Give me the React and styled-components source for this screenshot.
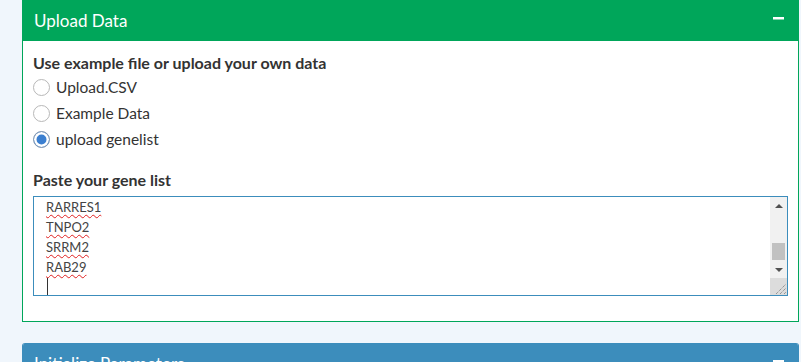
import React from 'react'
import styled, { createGlobalStyle } from 'styled-components'

const GlobalStyle = createGlobalStyle`
  html, body {
    margin: 0;
    padding: 0;
    background: #f0f6fc;
    font-family: Lato, "Open Sans", sans-serif;
    color: #333;
    overflow: hidden;
  }
`

const Page = styled.div`
  padding: 0 2px 0 22px;
  display: flex;
  flex-direction: column;
  gap: 21px;
`

const Box = styled.section`
  background: #fff;
  border: 1px solid ${p => p.color};
  border-top: none;
  border-radius: ${p => (p.rounded ? '3px 3px 0 0' : '0')};
  overflow: hidden;
`

const BoxHeader = styled.header`
  height: 41px;
  margin: 0 -1px;
  padding: 0 15px 0 12px;
  background: ${p => p.color};
  color: #fff;
  display: flex;
  align-items: center;
  justify-content: space-between;
`

const Title = styled.h3`
  margin: 0;
  font-size: 17px;
  font-weight: 400;
  line-height: 1;
`

const Minus = styled.span`
  width: 11px;
  height: 2px;
  margin-top: -6px;
  background: #fff;
  box-shadow: 0 1px 0 rgba(255, 255, 255, 0.5);
`

const BoxBody = styled.div`
  padding: 11px 10px 25px 10px;
`

const Label = styled.div`
  font-size: 16px;
  font-weight: 700;
  line-height: 21px;
  margin-bottom: ${p => p.gap}px;
`

const RadioGroup = styled.div`
  display: flex;
  flex-direction: column;
  margin-bottom: 17px;
`

const RadioRow = styled.label`
  height: 26px;
  display: flex;
  align-items: center;
  gap: 6px;
  font-size: 15.5px;
`

const RadioDot = styled.span`
  width: 17px;
  height: 17px;
  box-sizing: border-box;
  border-radius: 50%;
  border: 1px solid ${p => (p.checked ? '#8a9bb0' : '#b8b8b8')};
  background: ${p => (p.checked ? '#3b7fd0' : '#fff')};
  box-shadow: ${p => (p.checked ? 'inset 0 0 0 2.5px #fff' : 'none')};
`

const TextBox = styled.div`
  height: 100px;
  box-sizing: border-box;
  border: 1px solid #3c8dbc;
  display: flex;
  overflow: hidden;
`

const Lines = styled.div`
  flex: 1;
  padding-left: 12px;
  font-size: 13px;
  line-height: 20px;
  color: #444;
`

const Gene = styled.div`
  height: 20px;
  span {
    text-decoration: underline wavy #e02020;
    text-decoration-thickness: 1px;
    text-underline-offset: 2px;
  }
`

const Caret = styled.div`
  height: 20px;
  width: 1px;
  margin-left: 1px;
  background: #333;
  transform: translateY(1px);
`

const ScrollBar = styled.div`
  width: 17px;
  background: #f1f1f1;
  display: flex;
  flex-direction: column;
  align-items: center;
`

const Arrow = styled.span`
  width: 0;
  height: 0;
  margin: ${p => p.m};
  border-left: 4px solid transparent;
  border-right: 4px solid transparent;
  ${p => (p.up ? 'border-bottom: 4px solid #505050;' : 'border-top: 4px solid #505050;')}
`

const Track = styled.div`
  flex: 1;
  width: 100%;
  display: flex;
  justify-content: center;
  align-items: flex-end;
`

const Thumb = styled.div`
  width: 13px;
  height: 17px;
  margin-bottom: 8px;
  background: #c1c1c1;
`

const Grip = styled.div`
  width: 17px;
  height: 17px;
  background: #dcdcdc;
`

const genes = ['RARRES1', 'TNPO2', 'SRRM2', 'RAB29']

export default function App() {
  return (
    <Page>
      <GlobalStyle />
      <Box color="#00a65a">
        <BoxHeader color="#00a65a">
          <Title>Upload Data</Title>
          <Minus />
        </BoxHeader>
        <BoxBody>
          <Label gap={1}>Use example file or upload your own data</Label>
          <RadioGroup>
            <RadioRow><RadioDot />Upload.CSV</RadioRow>
            <RadioRow><RadioDot />Example Data</RadioRow>
            <RadioRow><RadioDot checked />upload genelist</RadioRow>
          </RadioGroup>
          <Label gap={6}>Paste your gene list</Label>
          <TextBox>
            <Lines>
              {genes.map(g => (
                <Gene key={g}><span>{g}</span></Gene>
              ))}
              <Caret />
            </Lines>
            <ScrollBar>
              <Arrow up m="7px 0 0" />
              <Track><Thumb /></Track>
              <Arrow m="0 0 6px" />
              <Grip>
                <svg width="17" height="17" viewBox="0 0 17 17">
                  <path d="M6 16 L16 6 M10 16 L16 10 M14 16 L16 14" stroke="#777" strokeWidth="1" strokeDasharray="1 1" />
                </svg>
              </Grip>
            </ScrollBar>
          </TextBox>
        </BoxBody>
      </Box>
      <Box color="#3c8dbc" rounded>
        <BoxHeader color="#3c8dbc">
          <Title>Initialize Parameters</Title>
          <Minus />
        </BoxHeader>
        <BoxBody />
      </Box>
    </Page>
  )
}
